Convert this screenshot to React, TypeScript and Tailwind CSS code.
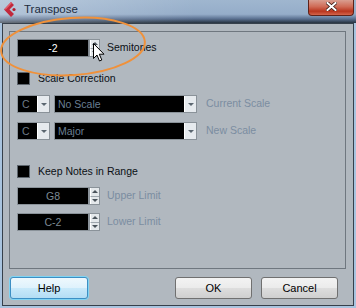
import React from "react";

function Spinner() {
  return (
    <div className="flex flex-col w-[11px] h-[18px] border border-[#8a9299] bg-[#e4e8eb]">
      <div className="flex-1 flex items-center justify-center border-b border-[#9ea6ad] border-l border-l-white">
        <div className="w-0 h-0 border-l-[3px] border-r-[3px] border-b-[3px] border-l-transparent border-r-transparent border-b-[#4a535b]" />
      </div>
      <div className="flex-1 flex items-center justify-center border-l border-l-white">
        <div className="w-0 h-0 border-l-[3px] border-r-[3px] border-t-[3px] border-l-transparent border-r-transparent border-t-[#4a535b]" />
      </div>
    </div>
  );
}

function DropArrow() {
  return (
    <div className="w-[12px] h-full flex items-center justify-center bg-[#e6eaee] border-l border-l-white">
      <div className="w-0 h-0 border-l-[3px] border-r-[3px] border-t-[3px] border-l-transparent border-r-transparent border-t-[#5b6670]" />
    </div>
  );
}

function Check({ label }: { label: string }) {
  return (
    <div className="flex items-center h-[13px]">
      <div className="w-[13px] h-[13px] bg-black border border-[#5d656d]" />
      <span className="ml-[8px] text-[10.5px] text-[#0b0f14] leading-none">{label}</span>
    </div>
  );
}

function ComboRow({ value, label }: { value: string; label: string }) {
  return (
    <div className="flex items-center h-[18px]">
      <div className="flex w-[33px] h-[18px] border border-[#8a9299] bg-black">
        <span className="flex-1 pl-[4px] text-[10.5px] leading-[16px] text-[#6d7b88]">C</span>
        <DropArrow />
      </div>
      <div className="ml-[4px] flex w-[143px] h-[18px] border border-[#8a9299] bg-black">
        <span className="flex-1 pl-[3px] text-[10.5px] leading-[16px] text-[#6a7f94]">{value}</span>
        <DropArrow />
      </div>
      <span className="ml-[9px] text-[10.5px] text-[#7b8da1]">{label}</span>
    </div>
  );
}

function NumRow({ value, label, active }: { value: string; label: string; active?: boolean }) {
  return (
    <div className="flex items-center h-[18px]">
      <div
        className={
          active
            ? "w-[72px] h-[18px] border border-[#7c848c] bg-black text-center text-[10.5px] leading-[16px] text-white"
            : "w-[72px] h-[18px] border border-[#8a9299] bg-black text-center text-[10.5px] leading-[16px] text-[#7d8a94]"
        }
      >
        {value}
      </div>
      <Spinner />
      <span className={active ? "ml-[7px] text-[10.5px] text-[#0b0f14]" : "ml-[7px] text-[10.5px] text-[#7b8da1]"}>
        {label}
      </span>
    </div>
  );
}

export default function App() {
  return (
    <div className="relative w-[356px] h-[308px] overflow-hidden bg-[#a9c4df] font-['Liberation_Sans',Arial,sans-serif] select-none">
      {/* title bar */}
      <div className="h-[23px] flex items-center pl-[4px] pb-[4px] [background-image:linear-gradient(90deg,rgba(255,255,255,0.28),rgba(255,255,255,0)_55%),linear-gradient(180deg,#9fb6cf_0%,#95adc9_62%,#5a7090_82%,#26323f_100%)]">
        <svg width="12" height="15" viewBox="0 0 12 15">
          <polygon points="7,0 0,7.5 7,15 10,12 5.5,7.5 10,3" fill="#c2283c" />
          <polygon points="7,0 0,7.5 2,7.5 8,1" fill="#e0606e" />
          <circle cx="10" cy="7.5" r="1.6" fill="#b01f30" />
        </svg>
        <span className="ml-[8px] text-[11.5px] text-[#1c2b3c]">Transpose</span>
      </div>

      {/* close button */}
      <div className="absolute top-0 right-[2px] w-[46px] h-[16px] rounded-b-[4px] border border-t-0 border-[#5e2219] [background-image:linear-gradient(180deg,#d99e90_0%,#cf6a55_45%,#b9361f_75%,#d4654c_100%)] flex items-center justify-center">
        <svg width="11" height="9" viewBox="0 0 11 9" className="-mt-[3px]">
          <path d="M1.5 1 L9.5 8 M9.5 1 L1.5 8" stroke="#3b1a14" strokeWidth="3.6" strokeLinecap="square" />
          <path d="M1.5 1 L9.5 8 M9.5 1 L1.5 8" stroke="#ffffff" strokeWidth="2" strokeLinecap="square" />
        </svg>
      </div>

      {/* dialog body */}
      <div className="mx-[2px] h-[283px] border border-[#36404b] bg-[#b1b8bf] flex flex-col">
        <div className="ml-[6px] mt-[7px] w-[337px] h-[238px] border border-[#6f777f] pl-[7px] pt-[7px] flex flex-col">
          <NumRow value="-2" label="Semitones" active />
          <div className="mt-[15px]">
            <Check label="Scale Correction" />
          </div>
          <div className="mt-[10px]">
            <ComboRow value="No Scale" label="Current Scale" />
          </div>
          <div className="mt-[9px]">
            <ComboRow value="Major" label="New Scale" />
          </div>
          <div className="mt-[25px]">
            <Check label="Keep Notes in Range" />
          </div>
          <div className="mt-[9px]">
            <NumRow value="G8" label="Upper Limit" />
          </div>
          <div className="mt-[8px]">
            <NumRow value="C-2" label="Lower Limit" />
          </div>
        </div>

        <div className="mt-[8px] flex items-center pl-[7px] pr-[15px]">
          <button className="w-[78px] h-[22px] rounded-[3px] border border-[#3c8fc4] shadow-[0_0_0_1px_#7fd3f2] text-[11px] text-black [background-image:linear-gradient(180deg,#eef8fd_0%,#dff2fc_48%,#c8e9fa_52%,#b3ddf4_100%)]">
            Help
          </button>
          <div className="flex-1" />
          <button className="w-[77px] h-[22px] rounded-[3px] border border-[#707070] text-[11px] text-black [background-image:linear-gradient(180deg,#f3f3f3_0%,#ebebeb_48%,#dddddd_52%,#cfcfcf_100%)]">
            OK
          </button>
          <button className="ml-[9px] w-[77px] h-[22px] rounded-[3px] border border-[#707070] text-[11px] text-black [background-image:linear-gradient(180deg,#f3f3f3_0%,#ebebeb_48%,#dddddd_52%,#cfcfcf_100%)]">
            Cancel
          </button>
        </div>
      </div>

      {/* annotation ellipse */}
      <svg className="absolute left-0 top-0 pointer-events-none" width="356" height="308">
        <ellipse cx="73" cy="46.5" rx="72" ry="28.5" fill="none" stroke="#f0913a" strokeWidth="2" transform="rotate(-4 73 46.5)" />
      </svg>

      {/* mouse cursor */}
      <svg className="absolute left-[93px] top-[43px] pointer-events-none" width="13" height="20" viewBox="0 0 13 20">
        <path d="M0.5 0.5 L0.5 15.5 L4 12 L6.5 18 L8.8 17 L6.3 11.2 L11 11.2 Z" fill="#ffffff" stroke="#000000" strokeWidth="1" strokeLinejoin="miter" />
      </svg>
    </div>
  );
}
